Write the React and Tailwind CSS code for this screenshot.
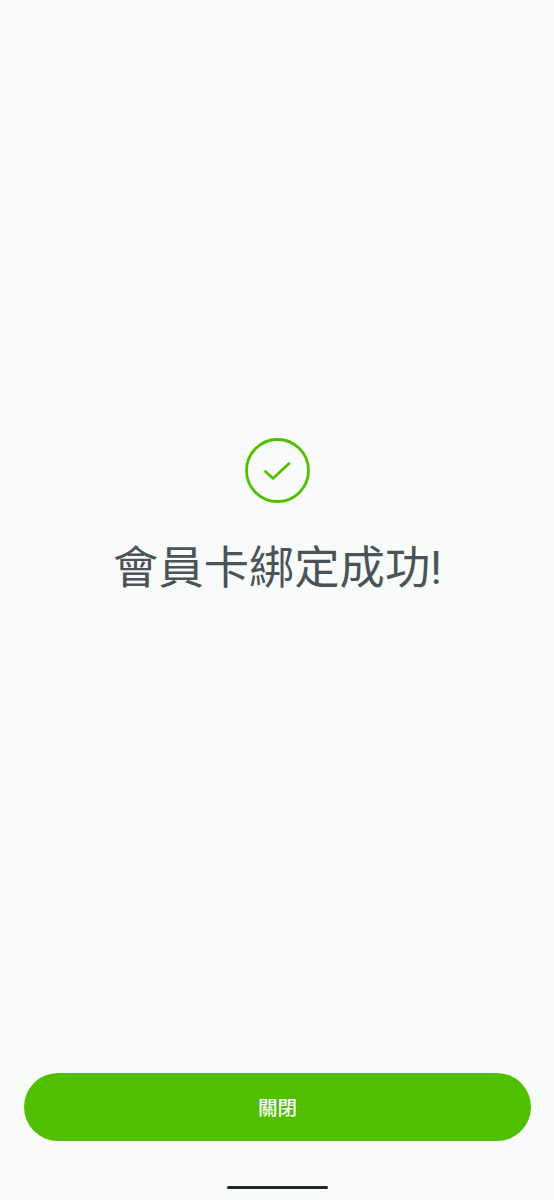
export default function App() {
  return (
    <div className="flex h-[1200px] w-full flex-col items-center bg-[#f9fbfb] pl-px font-['Roboto','Noto_Sans_CJK_TC',sans-serif]">
      <div className="flex flex-col items-center pt-[438px]">
        <svg width="65" height="65" viewBox="0 0 65 65" fill="none">
          <circle cx="32.5" cy="32.5" r="31" stroke="#4fbf00" strokeWidth="2.8" />
          <path d="M20.5 33.5 L28 40.5 L44 25.5" stroke="#4fbf00" strokeWidth="2.6" strokeLinecap="round" strokeLinejoin="round" />
        </svg>
        <h1 className="mt-[37px] text-[45.3px] leading-[58px] font-normal text-[#4a5458] whitespace-nowrap">會員卡綁定成功!</h1>
      </div>
      <div className="mt-auto w-full pl-[23px] pr-[23px]">
        <button className="flex h-[68px] w-full items-center justify-center rounded-[34px] bg-[#4fbf00] pt-[3px] text-[19.5px] font-medium text-white">關閉</button>
      </div>
      <div className="mt-[45px] mb-[11px] h-[3px] w-[101px] rounded-full bg-[#22252a]" />
    </div>
  );
}
